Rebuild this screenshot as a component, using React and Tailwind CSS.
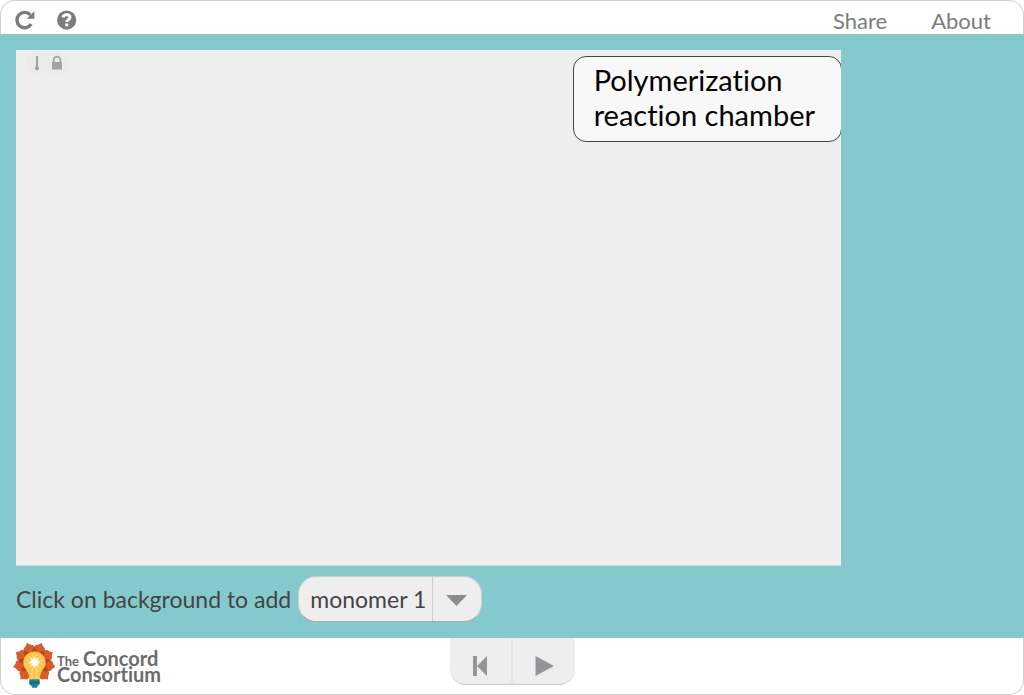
import React from "react";

function ReloadIcon() {
  return (
    <svg viewBox="0 0 20 20" className="size-5" aria-hidden="true">
      <path d="M16.200 14.200A7.700 7.700 0 1 1 15.300 4.800" fill="none" stroke="#7c7c7c" strokeWidth="3.400" />
      <path d="M19.400 1.200v7.600h-7.800z" fill="#7c7c7c" />
    </svg>
  );
}

function HelpIcon() {
  return (
    <svg viewBox="0 0 512 512" className="size-5" aria-hidden="true">
      <circle cx="248" cy="258" r="246" fill="#7c7c7c" />
      <path
        fill="none"
        stroke="#fff"
        strokeWidth="78"
        d="M154 190C166 142 204 124 248 124c50 0 84 26 84 64 0 66-84 54-84 122"
      />
      <path fill="#fff" d="M208 346h80v72h-80z" />
    </svg>
  );
}

function ThermometerIcon() {
  return (
    <svg viewBox="0 0 24 24" className="size-6" aria-hidden="true">
      <circle cx="12" cy="12" r="12" fill="#eaebeb" />
      <path d="M12 5v12" stroke="#a3a3a3" strokeWidth="2" />
      <circle cx="12" cy="17.300" r="2.100" fill="#a3a3a3" />
    </svg>
  );
}

function LockIcon() {
  return (
    <svg viewBox="0 0 24 24" className="size-6" aria-hidden="true">
      <circle cx="12" cy="12" r="12" fill="#eaebeb" />
      <path d="M8.700 12V9a3.300 3.300 0 0 1 6.600 0v3" fill="none" stroke="#a3a3a3" strokeWidth="1.700" />
      <rect x="7" y="11" width="10" height="7.500" rx=".6" fill="#a3a3a3" />
    </svg>
  );
}

const petals = [20, 60, 100, 140, 220, 260, 300, 340];
const gaps = [0, 40, 80, 120, 240, 280, 320];
const rays = [15, 45, 75, 105, 135, 165, 195, 225, 255, 285, 315, 345];

function BulbLogo() {
  return (
    <svg viewBox="0 0 42 46" className="h-[46px] w-[42px] shrink-0" aria-hidden="true">
      <g fill="#d95b29">
        {petals.map((a) => (
          <path key={a} transform={`translate(21.300 20) rotate(${a})`} d="M-5.800-8Q-7-13.500-4.800-17.500Q-2-18.300 0-21.500Q2-18.300 4.800-17.500Q7-13.500 5.800-8L0 0z" />
        ))}
      </g>
      <g fill="#b8431f">
        {gaps.map((a) => (
          <path key={a} transform={`translate(21.300 20) rotate(${a})`} d="M-3.600-9Q-2.500-13 0-16Q2.500-13 3.600-9L0 0z" />
        ))}
      </g>
      <path d="M21.500 8.500C14.700 8.500 10.300 13.500 10.300 19.500c0 4.500 2.500 6.500 4.200 9.500 1.200 2.200 1.500 4.800 2 7.500h10c.5-2.700.8-5.300 2-7.500 1.700-3 4.200-5 4.200-9.500C32.700 13.500 28.300 8.500 21.500 8.500z" fill="#fbc548" />
      <g stroke="#fddc7c" strokeWidth="1.100">
        {rays.map((a) => (
          <path key={a} transform={`translate(21.500 19.300) rotate(${a})`} d="M0-4v-5" />
        ))}
        <path d="M19 26v10M24 26v10" />
      </g>
      <path d="M21.500 14l1.200 2.400 2.500-.9-.9 2.500 2.400 1.200-2.400 1.200.9 2.500-2.500-.9-1.200 2.400-1.200-2.400-2.500.9.9-2.500-2.400-1.200 2.400-1.200-.9-2.500 2.500.9z" fill="#fff" stroke="#fff" strokeWidth=".5" />
      <path d="M16.300 36.300h10.400v4c0 1.200-1 2-1.900 2.300l-1 2.200h-4.600l-1-2.200c-.9-.3-1.900-1.100-1.900-2.300z" fill="#168492" />
      <path d="M16.300 39.800h10.400" stroke="#0c5d6b" strokeWidth="1.100" />
    </svg>
  );
}

export default function App() {
  return (
    <div className="flex min-h-screen flex-col bg-white font-[Lato,sans-serif] [font-variant-ligatures:none]">
      <header className="flex h-[34px] items-center justify-between rounded-t-[15px] border border-b-0 border-[#cfcfcf] pt-[5px] pr-8 pl-3.5">
        <div className="flex gap-[22px]">
          <button type="button" aria-label="Reload">
            <ReloadIcon />
          </button>
          <button type="button" aria-label="Help">
            <HelpIcon />
          </button>
        </div>
        <nav className="flex gap-11 pt-0.5 text-[22px] leading-6 text-[#7c7c7c]">
          <a href="#share">Share</a>
          <a href="#about">About</a>
        </nav>
      </header>

      <main className="flex grow flex-col bg-[#84cacd] pt-4 pr-[18px] pl-4">
        <section className="relative w-5/6 grow overflow-hidden border-b border-[#d5dcdc] bg-[#eee]">
          <div className="flex pt-px pl-[9px]">
            <ThermometerIcon />
            <div className="-ml-1">
              <LockIcon />
            </div>
          </div>
          <h1 className="absolute top-1.5 -right-px rounded-[13px] border border-[#444] bg-[#f8f8f8] pt-[5px] pr-[26px] pb-[9px] pl-5 text-[29px] leading-[35px] text-black">
            Polymerization
            <br />
            reaction chamber
          </h1>
        </section>

        <div className="flex h-[72px] items-center gap-[7px] pb-1.5 text-[23px] text-[#444]">
          <label htmlFor="monomer">Click on background to add</label>
          <div className="relative">
            <select
              id="monomer"
              className="h-[46px] w-[184px] appearance-none rounded-[18px] border border-[#ccc] border-b-[#aaa] bg-[#eee] pl-[11px] text-[23px] text-[#444]"
            >
              <option>monomer 1</option>
              <option>monomer 2</option>
            </select>
            <svg viewBox="0 0 49 44" className="pointer-events-none absolute top-px right-px h-11 w-[49px]" aria-hidden="true">
              <path d="M.5 0v44" stroke="#ccc" />
              <path d="M14 18h21L24.500 29z" fill="#8c8c8c" />
            </svg>
          </div>
        </div>
      </main>

      <footer className="grid h-[57px] grid-cols-[1fr_auto_1fr] items-start rounded-b-[15px] border border-t-0 border-[#cfcfcf]">
        <a href="#concord" className="flex items-start gap-0.5 pt-[5px] pl-3 font-bold text-[#6b6b6b]">
          <BulbLogo />
          <span className="flex flex-col pt-[7px]">
            <span className="flex h-4 items-baseline gap-1">
              <span className="text-[13px] leading-4">The</span>
              <span className="text-[20px] leading-4">Concord</span>
            </span>
            <span className="text-[20px] leading-4">Consortium</span>
          </span>
        </a>
        <div className="flex overflow-hidden rounded-b-[16px] border-b border-[#ccc] bg-[#eee]">
          <button type="button" aria-label="Reset" className="h-[46px] w-[63px] border-r-2 border-[#e4e4e4]">
            <svg viewBox="0 0 61 46" aria-hidden="true">
              <path d="M23 18h4v20h-4zM37 18v20L27 28z" fill="#939598" />
            </svg>
          </button>
          <button type="button" aria-label="Play" className="h-[46px] w-[62px]">
            <svg viewBox="0 0 62 46" aria-hidden="true">
              <path d="M22.500 18v20l18.500-10z" fill="#939598" />
            </svg>
          </button>
        </div>
      </footer>
    </div>
  );
}
